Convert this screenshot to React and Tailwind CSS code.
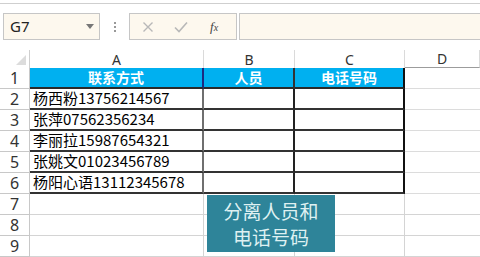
import { ChevronDown } from 'lucide-react'

const cols = [
  { key: 'A', w: 'w-[174px]' },
  { key: 'B', w: 'w-[91px]' },
  { key: 'C', w: 'w-[110px]' },
  { key: 'D', w: 'w-[75px]' },
]

const people = [
  '杨西粉13756214567',
  '张萍07562356234',
  '李丽拉15987654321',
  '张姚文01023456789',
  '杨阳心语13112345678',
]

function RowHead({ n }) {
  return (
    <div className="w-[30px] shrink-0 flex items-center justify-center border-r border-b border-[#c8c8c8] text-[16px] text-[#333] font-['Noto_Sans',sans-serif]">
      {n}
    </div>
  )
}

function HeaderRow() {
  const labels = ['联系方式', '人员', '电话号码']
  return (
    <div className="flex h-[21px]">
      <RowHead n={1} />
      <div className="w-[174px] bg-[#00b0f0] border-r-2 border-r-[#1c2a80] border-b-2 border-b-[#2a2a2a] flex items-center justify-center text-white font-bold text-[14px]">
        {labels[0]}
      </div>
      <div className="w-[91px] bg-[#00b0f0] border-r-2 border-r-[#333] border-b-2 border-b-[#2a2a2a] flex items-center justify-center text-white font-bold text-[14px]">
        {labels[1]}
      </div>
      <div className="w-[110px] bg-[#00b0f0] border-r-2 border-r-[#111] border-b-2 border-b-[#2a2a2a] flex items-center justify-center text-white font-bold text-[14px]">
        {labels[2]}
      </div>
      <div className="w-[75px] border-b border-[#dcdcdc]" />
    </div>
  )
}

function DataRow({ n, text }) {
  return (
    <div className="flex h-[21px]">
      <RowHead n={n} />
      <div className="w-[174px] border-r-2 border-r-[#6f6f6f] border-b-2 border-b-[#333] flex items-center pl-[3px] text-[15px] text-black whitespace-nowrap">
        {text}
      </div>
      <div className="w-[91px] border-r-2 border-r-[#222] border-b-2 border-b-[#333]" />
      <div className="w-[110px] border-r-2 border-r-[#111] border-b-2 border-b-[#333]" />
      <div className="w-[75px] border-b border-[#dcdcdc]" />
    </div>
  )
}

function EmptyRow({ n }) {
  return (
    <div className="flex h-[21px]">
      <RowHead n={n} />
      <div className="w-[174px] border-r border-b border-[#d4d4d4]" />
      <div className="w-[91px] border-r border-b border-[#d4d4d4]" />
      <div className="w-[110px] border-r border-b border-[#d4d4d4]" />
      <div className="w-[75px] border-b border-[#d4d4d4]" />
    </div>
  )
}

export default function App() {
  return (
    <div className="relative w-[480px] h-[257px] overflow-hidden bg-white font-['Noto_Sans_CJK_SC',sans-serif]">
      {/* formula bar */}
      <div className="h-[10px] border-t border-[#cfcfcf] mt-[3px]" />
      <div className="flex h-[27px] items-stretch">
        <div className="ml-[3px] w-[97px] border border-[#c6c6c6] bg-[#fdf8ee] flex items-center justify-between pl-[6px] pr-[5px]">
          <span className="text-[15px] text-[#222] font-['Noto_Sans',sans-serif]">G7</span>
          <svg width="8" height="5" viewBox="0 0 8 5"><path d="M0 0h8L4 5z" fill="#777" /></svg>
        </div>
        <div className="w-[29px] flex flex-col items-center justify-center gap-[2px]">
          <span className="w-[2px] h-[2px] bg-[#999]" />
          <span className="w-[2px] h-[2px] bg-[#999]" />
          <span className="w-[2px] h-[2px] bg-[#999]" />
        </div>
        <div className="w-[108px] border border-[#c6c6c6] bg-[#fdf8ee] flex items-center pl-[12px]">
          <svg width="12" height="12" viewBox="0 0 12 12" className="mr-[20px]">
            <path d="M1.5 1.5l9 9M10.5 1.5l-9 9" stroke="#b8b8b8" strokeWidth="1.4" />
          </svg>
          <svg width="14" height="12" viewBox="0 0 14 12" className="mr-[22px]">
            <path d="M1 6.5l4 4L13 1.5" stroke="#b8b8b8" strokeWidth="1.6" fill="none" />
          </svg>
          <span className="text-[13px] italic text-[#444] font-['Liberation_Serif',serif]">
            f<span className="text-[10px]">x</span>
          </span>
        </div>
        <div className="ml-[2px] flex-1 border border-r-0 border-[#c6c6c6] bg-[#fdf8ee]" />
      </div>
      <div className="h-[10px]" />

      {/* column headers */}
      <div className="flex h-[18px]">
        <div className="w-[30px] border-r border-[#cfcfcf] flex items-end justify-end pr-[3px] pb-[3px]">
          <svg width="10" height="10" viewBox="0 0 10 10"><path d="M10 0v10H0z" fill="#dcdcdc" /></svg>
        </div>
        {cols.map((c) => (
          <div
            key={c.key}
            className={`${c.w} flex items-center justify-center text-[14px] text-[#333] font-['Noto_Sans',sans-serif] border-r border-[#dadada] ${c.key === 'D' ? 'border-b border-b-[#9c9c9c]' : ''}`}
          >
            {c.key}
          </div>
        ))}
      </div>

      <HeaderRow />
      {people.map((p, i) => (
        <DataRow key={p} n={i + 2} text={p} />
      ))}
      <EmptyRow n={7} />
      <EmptyRow n={8} />
      <EmptyRow n={9} />

      {/* text box shape */}
      <div className="absolute left-[207px] top-[195px] w-[128px] h-[57px] bg-[#2e8499] flex flex-col items-center justify-center text-[19px] leading-[26px] text-[#dff1f2]">
        <span>分离人员和</span>
        <span>电话号码</span>
      </div>
    </div>
  )
}
